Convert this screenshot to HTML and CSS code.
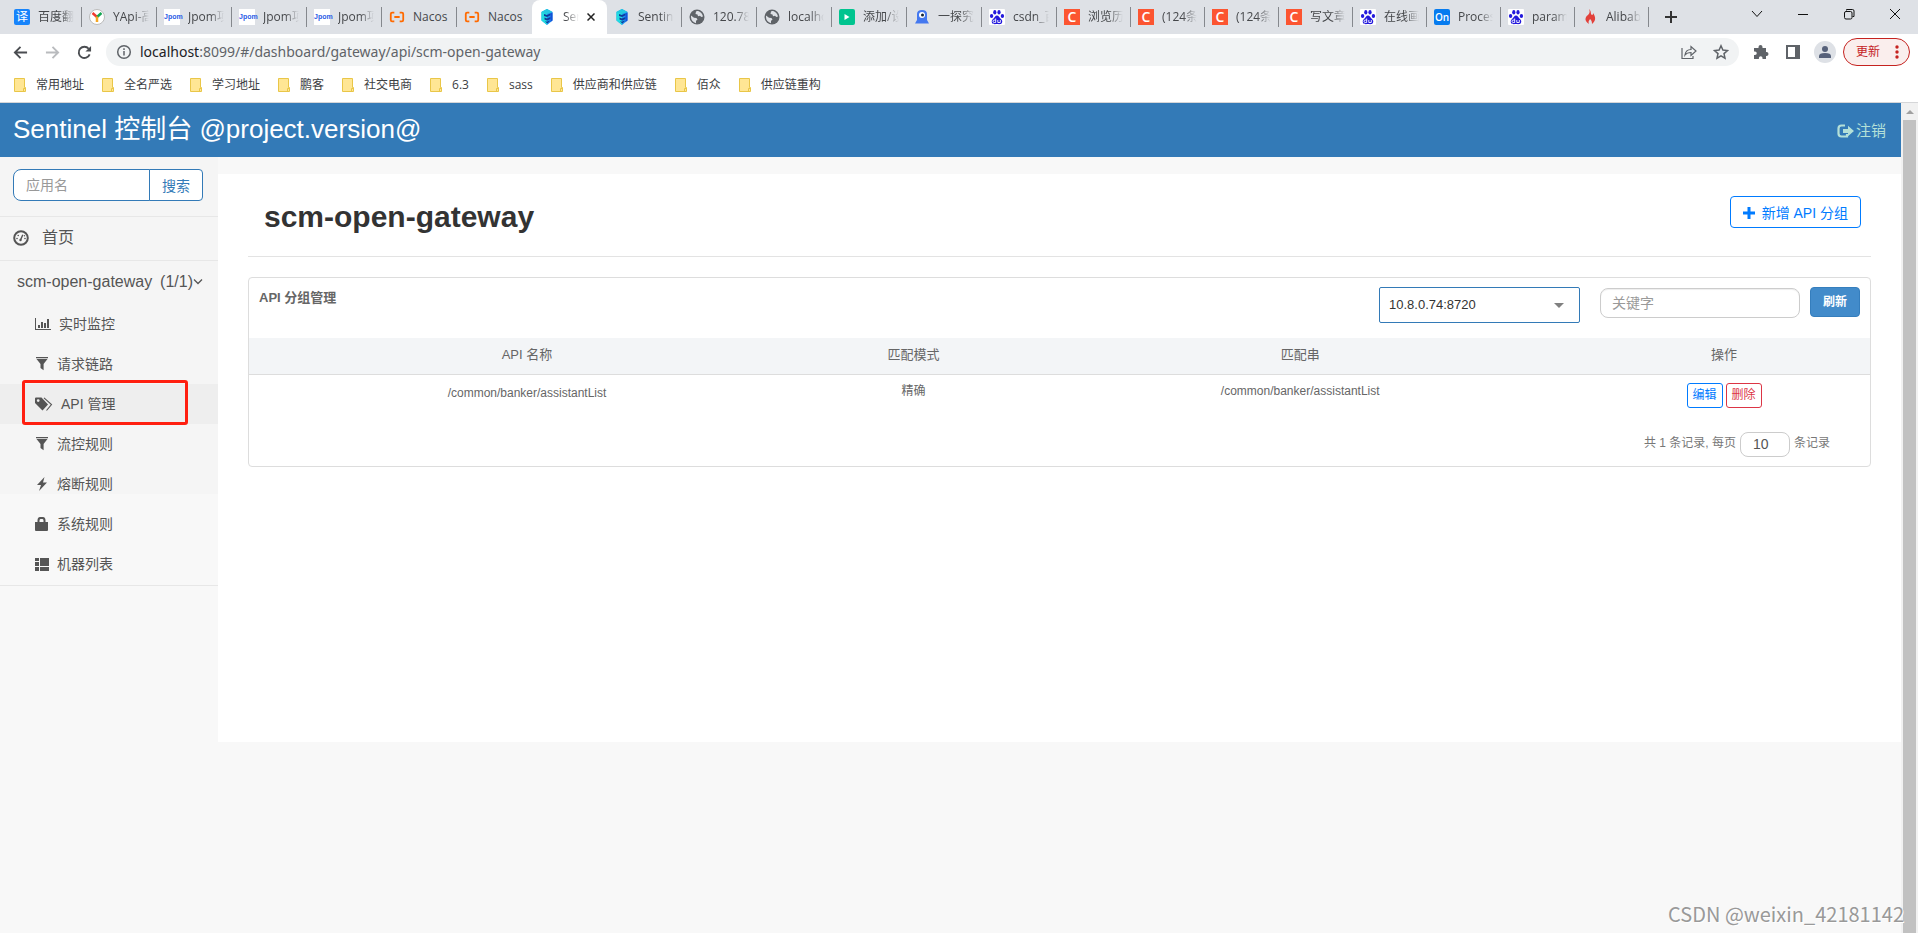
FILE: index.html
```html
<!DOCTYPE html>
<html lang="zh-CN">
<head>
<meta charset="utf-8">
<title>Sentinel 控制台</title>
<link rel="stylesheet" href="styles.css">
</head>
<body>
<svg class="defs" aria-hidden="true">
  <symbol id="paw" viewBox="0 0 16 16"><rect width="16" height="16" rx="1" fill="#fff"/><g fill="#2319dc"><ellipse cx="2.6" cy="7" rx="1.7" ry="2.1"/><ellipse cx="5.8" cy="3.2" rx="1.6" ry="2.2"/><ellipse cx="10" cy="3.2" rx="1.6" ry="2.2"/><ellipse cx="13.4" cy="7" rx="1.7" ry="2.1"/><path d="M8 6.6c1.8 0 2.4 2 3.7 3.2 1.6 1.4 1.9 2.5 1.3 4-.7 1.700-2.800 1.500-5 1.300-2.200.2-4.300.4-5-1.300-.6-1.500-.3-2.600 1.300-4C5.600 8.600 6.200 6.600 8 6.600z"/></g><path d="M6.700 9.500v4H5.200a1.200 1.200 0 010-2.400h1.500M8.800 11v2.500h2.500V11" fill="none" stroke="#fff" stroke-width=".9"/></symbol>
  <symbol id="globe" viewBox="0 0 16 16"><circle cx="8" cy="8" r="7.500" fill="#5f6368"/><path d="M2 6.500l3 2.200 2.500.3 1 1.700-1.500 1v2.500C4 13.500 2 11 2 8zM7 2.500L6.500 5l2 .5.500 1.700 2-.5 1.300 1.300 1.700-.5C13.500 4.500 11 2 8 2z" fill="#dee1e6"/></symbol>
  <symbol id="sentinel" viewBox="0 0 16 16"><path d="M8 0l5.500 3v8.500L8 16l-5.500-4.500V3z" fill="#1d8ff0"/><path d="M8 0v16l-5.500-4.500V3z" fill="#22dce0"/><path d="M8 0l5.500 3L8 5 2.500 3z" fill="#25c8e0"/><path d="M5 5l3 1 3.500-1.500v1.800L8 8 5 7zM5.500 8.500L8 9.500 11.500 8v2L8 11.500l-2.500-1zM6 12l2 .8 2.500-1.300v1L8 14.500z" fill="#0f3a98"/><path d="M11.500 4.500l2-1v8l-2 1.500z" fill="#1450d8"/></symbol>
  <symbol id="nacos" viewBox="0 0 18 16"><path d="M6 3H3.500Q2 3 2 4.500v7Q2 13 3.500 13H6M12 3h2.500Q16 3 16 4.500v7q0 1.500-1.500 1.500H12M6 8h6" fill="none" stroke="#ff6a00" stroke-width="2"/></symbol>
  <symbol id="folder" viewBox="0 0 12 14"><path d="M.5.500h10v9h1v4H.5z" fill="#ffe694" stroke="#e9c648"/><path d="M9.500 13V10.500h1.500" fill="none" stroke="#e9c648"/></symbol>
  <symbol id="filter" viewBox="0 0 14 14"><path d="M1 0h12v1.300H1zM1.500 2h11L8.600 7v6.300L5.500 11V7z"/></symbol>
</svg>

<header class="browser">
  <div class="tabstrip">
    <a class="tab first" href="#"><span class="fav f-blue">译</span><span class="tt">百度翻译</span></a>
    <a class="tab" href="#"><svg class="fav" viewBox="0 0 16 16"><circle cx="8" cy="8" r="7.500" fill="#fff" stroke="#bbb"/><path d="M3.500 4L8 8" stroke="#f23a2f" stroke-width="2.500"/><path d="M12.500 4L8 8" stroke="#15a653" stroke-width="2.500"/><path d="M8 7.500V13" stroke="#f5a623" stroke-width="2.500"/></svg><span class="tt">YApi-高效</span></a>
    <a class="tab" href="#"><span class="fav f-jpom">Jpom</span><span class="tt">Jpom项目</span></a>
    <a class="tab" href="#"><span class="fav f-jpom">Jpom</span><span class="tt">Jpom项目</span></a>
    <a class="tab" href="#"><span class="fav f-jpom">Jpom</span><span class="tt">Jpom项目</span></a>
    <a class="tab" href="#"><svg class="fav"><use href="#nacos"/></svg><span class="tt whole">Nacos</span></a>
    <a class="tab nosep" href="#"><svg class="fav"><use href="#nacos"/></svg><span class="tt whole">Nacos</span></a>
    <a class="tab active" href="#"><svg class="fav"><use href="#sentinel"/></svg><span class="tt">Sentinel</span><svg class="close" viewBox="0 0 8 8"><path d="M.5.500l7 7M7.500.500l-7 7" stroke="#222" stroke-width="1.500"/></svg></a>
    <a class="tab" href="#"><svg class="fav"><use href="#sentinel"/></svg><span class="tt">Sentinel</span></a>
    <a class="tab" href="#"><svg class="fav"><use href="#globe"/></svg><span class="tt">120.78.1</span></a>
    <a class="tab" href="#"><svg class="fav"><use href="#globe"/></svg><span class="tt">localhost</span></a>
    <a class="tab" href="#"><svg class="fav" viewBox="0 0 16 16"><rect width="16" height="16" rx="2" fill="#00c48f"/><path d="M5.500 5l5 3-5 3z" fill="#fff"/></svg><span class="tt">添加/设置</span></a>
    <a class="tab" href="#"><svg class="fav" viewBox="0 0 16 16"><path d="M3 5Q3 1 8 1t5 4v6l2 3.500H1L3 11z" fill="#4478ef"/><circle cx="8" cy="6" r="3" fill="#fff"/><circle cx="8.500" cy="6" r="1.500" fill="#123"/></svg><span class="tt">一探究竟</span></a>
    <a class="tab" href="#"><svg class="fav"><use href="#paw"/></svg><span class="tt">csdn_百度</span></a>
    <a class="tab narrow" href="#"><span class="fav f-c">C</span><span class="tt">浏览历史</span></a>
    <a class="tab narrow" href="#"><span class="fav f-c">C</span><span class="tt">(124条消息</span></a>
    <a class="tab narrow" href="#"><span class="fav f-c">C</span><span class="tt">(124条消息</span></a>
    <a class="tab narrow" href="#"><span class="fav f-c">C</span><span class="tt">写文章</span></a>
    <a class="tab narrow" href="#"><svg class="fav"><use href="#paw"/></svg><span class="tt">在线画图</span></a>
    <a class="tab narrow" href="#"><span class="fav f-on">On</span><span class="tt">Process</span></a>
    <a class="tab narrow" href="#"><svg class="fav"><use href="#paw"/></svg><span class="tt">params</span></a>
    <a class="tab narrow" href="#"><svg class="fav" viewBox="0 0 16 16"><path d="M7 0c3 3 1 5 3 6 1 0 1-1 1-2 3 4 3 8-1 11 0-3-1-4-2-5-1 2-2 2-1 5-5-3-4-7-1-9C8 4 8 2 7 0z" fill="#e2403a"/></svg><span class="tt">Alibaba</span></a>
    <button class="plain newtab" aria-label="新标签页"><svg viewBox="0 0 12 12" width="12" height="12"><path d="M6 0v12M0 6h12" stroke="#333" stroke-width="2"/></svg></button>
    <div class="winctl">
      <button class="plain" aria-label="搜索标签页"><svg viewBox="0 0 12 12"><path d="M1 3l5 5.500L11 3" /></svg></button>
      <button class="plain" aria-label="最小化"><svg viewBox="0 0 12 12"><path d="M1 6.500h10"/></svg></button>
      <button class="plain" aria-label="还原"><svg viewBox="0 0 12 12"><path d="M3.500 2.500V1.500h6q1.500 0 1.500 1.500v5.500h-1.500"/><rect x="1.500" y="3.500" width="7.500" height="7.500" rx="1.500"/></svg></button>
      <button class="plain" aria-label="关闭"><svg viewBox="0 0 12 12"><path d="M1 1l10 10M11 1L1 11"/></svg></button>
    </div>
  </div>

  <div class="toolbar">
    <button class="plain nav" aria-label="后退"><svg viewBox="0 0 16 16"><path d="M15 8H2M8 2L2 8l6 6" fill="none" stroke="#4a4d51" stroke-width="2"/></svg></button>
    <button class="plain nav" aria-label="前进"><svg viewBox="0 0 16 16"><path d="M1 8h13M8 2l6 6-6 6" fill="none" stroke="#b9bbbe" stroke-width="2"/></svg></button>
    <button class="plain nav" aria-label="刷新页面"><svg viewBox="0 0 16 16"><path d="M13.500 10A6 6 0 1112.500 4" fill="none" stroke="#4a4d51" stroke-width="2"/><path d="M15 1v6H9z" fill="#4a4d51"/></svg></button>
    <div class="omnibox">
      <svg class="i16" viewBox="0 0 16 16"><circle cx="8" cy="8" r="6.300" fill="none" stroke="#5f6368" stroke-width="1.500"/><path d="M8 7v4.500M8 4.300v1.600" stroke="#5f6368" stroke-width="1.500"/></svg>
      <span class="url"><b>localhost</b>:8099/#/dashboard/gateway/api/scm-open-gateway</span>
      <svg class="i16" viewBox="0 0 16 16"><path d="M1 4v10.500h11V12M4 11c.5-4 3-5.500 6-5.500V2.500L15 7l-5 4.500V8.500C7.500 8.500 5.500 9 4 11z" fill="none" stroke="#5f6368" stroke-width="1.200"/></svg>
      <svg class="i16" viewBox="0 0 16 16"><path d="M8 1.800l1.900 4.300 4.600.4-3.500 3.100 1 4.600L8 11.800l-4 2.400 1-4.600L1.500 6.500l4.600-.4z" fill="none" stroke="#5f6368" stroke-width="1.500"/></svg>
    </div>
    <div class="exts">
      <svg class="i16" viewBox="0 0 16 16"><path d="M1 4h4.500V3a2 2 0 014 0v1H13v4h.500a2 2 0 010 4H13v3H9.500v-1a1.800 1.800 0 00-3.600 0v1H1v-4h1a1.700 1.700 0 000-3.500H1z" fill="#5f6368"/></svg>
      <svg class="i16" viewBox="0 0 16 16"><path d="M1 1h14v14H1zM3 3v10h7V3z" fill="#5f6368" fill-rule="evenodd"/></svg>
      <svg class="avatar" viewBox="0 0 22 22"><circle cx="11" cy="11" r="11" fill="#dee1e6"/><circle cx="11" cy="8" r="3" fill="#56617a"/><path d="M5 17v-2q0-3 6-3t6 3v2z" fill="#56617a"/></svg>
      <button class="update">更新<svg viewBox="0 0 4 14" width="4" height="14"><g fill="#c5221f"><circle cx="2" cy="2" r="1.700"/><circle cx="2" cy="7" r="1.700"/><circle cx="2" cy="12" r="1.700"/></g></svg></button>
    </div>
  </div>

  <nav class="bookmarks" aria-label="书签">
    <a href="#"><svg><use href="#folder"/></svg>常用地址</a>
    <a href="#"><svg><use href="#folder"/></svg>全名严选</a>
    <a href="#"><svg><use href="#folder"/></svg>学习地址</a>
    <a href="#"><svg><use href="#folder"/></svg>鹏客</a>
    <a href="#"><svg><use href="#folder"/></svg>社交电商</a>
    <a href="#"><svg><use href="#folder"/></svg>6.3</a>
    <a href="#"><svg><use href="#folder"/></svg>sass</a>
    <a href="#"><svg><use href="#folder"/></svg>供应商和供应链</a>
    <a href="#"><svg><use href="#folder"/></svg>佰众</a>
    <a href="#"><svg><use href="#folder"/></svg>供应链重构</a>
  </nav>
</header>

<div class="viewport">
  <div class="app">
    <div class="topbar">
      <a class="brand" href="#">Sentinel 控制台 @project.version@</a>
      <a class="logout" href="#"><svg viewBox="0 0 17 14" width="17" height="14"><path d="M8 1.500H4.500Q1.500 1.500 1.500 4.500v5q0 3 3 3H10V10" fill="none" stroke="#b4e0d8" stroke-width="2.200"/><path d="M6 5h5V1.800L17 7l-6 5.200V9H6z" fill="#b4e0d8"/></svg>注销</a>
    </div>
    <div class="body">
      <aside class="sidebar">
        <form class="search">
          <input type="text" placeholder="应用名" aria-label="应用名">
          <button type="button">搜索</button>
        </form>
        <a class="home" href="#"><svg class="i16" viewBox="0 0 16 16"><circle cx="8" cy="8" r="6.800" fill="none" stroke="#555" stroke-width="2"/><path d="M7.500 10L9.800 4.800" stroke="#555" stroke-width="1.400"/><g fill="#555"><circle cx="7.500" cy="10" r="1.200"/><circle cx="4" cy="8.500" r=".8"/><circle cx="5.200" cy="5.500" r=".8"/><circle cx="12" cy="8.500" r=".8"/><circle cx="11.500" cy="5.800" r=".7"/></g></svg>首页</a>
        <a class="appname" href="#"><span>scm-open-gateway</span><span class="count">(1/1)</span><svg viewBox="0 0 10 6" width="10" height="6"><path d="M1 .500l4 4 4-4" fill="none" stroke="#555" stroke-width="1.300"/></svg></a>
        <ul class="menu">
          <li><a href="#"><svg class="wide" viewBox="0 0 16 14"><path d="M0 1h1v11h15v1H0zM3 8h2v3H3zM6 5h2v6H6zM9 6h2v5H9zM12 2h2v9h-2z"/></svg>实时监控</a></li>
          <li><a href="#"><svg><use href="#filter"/></svg>请求链路</a></li>
          <li class="current"><a href="#"><svg class="tags" viewBox="0 0 18 14"><path d="M0 1.500Q0 .5 1 .5h5.500L13 7.500 7.500 13.500 0 6zM3.200 2.200a1.400 1.400 0 100 2.800 1.400 1.400 0 000-2.800z" fill-rule="evenodd"/><path d="M9 .800L16.500 7.500 11.500 13.500" fill="none" stroke="#555" stroke-width="1.100"/></svg>API 管理</a><span class="mark"></span></li>
          <li><a href="#"><svg><use href="#filter"/></svg>流控规则</a></li>
          <li><a href="#"><svg viewBox="0 0 14 14"><path d="M9.500 0L2 8h4l-2 6 8-8.500H8z"/></svg>熔断规则</a></li>
          <li><a href="#"><svg viewBox="0 0 14 14"><path d="M0 5h2.500V3.500Q2.500 0 5 0h3q2.500 0 2.500 3.500V5H13v8q0 1-1 1H1q-1 0-1-1zM4.500 5h4V3.500Q8.500 2 7.500 2h-2q-1 0-1 1.500z" fill-rule="evenodd"/></svg>系统规则</a></li>
          <li><a href="#"><svg viewBox="0 0 14 14"><path d="M0 1h4v3H0zM5 1h9v8H5zM0 5h4v4H0zM0 10h4v4H0zM5 10h9v4H5z"/></svg>机器列表</a></li>
        </ul>
      </aside>
      <main class="content">
        <div class="heading">
          <h1>scm-open-gateway</h1>
          <button class="add"><svg viewBox="0 0 12 12" width="12" height="12"><path d="M6 0v12M0 6h12" stroke="#007bff" stroke-width="3"/></svg>新增 API 分组</button>
        </div>
        <section class="panel">
          <div class="panel-head">
            <h2>API 分组管理</h2>
            <div class="picker">
              <select aria-label="机器"><option>10.8.0.74:8720</option></select>
              <svg viewBox="0 0 10 5" width="10" height="5"><path d="M0 0h10L5 5z" fill="#808080"/></svg>
            </div>
            <input class="keyword" type="text" placeholder="关键字" aria-label="关键字">
            <button class="refresh">刷新</button>
          </div>
          <table>
            <colgroup><col class="c-name"><col class="c-mode"><col class="c-name"><col></colgroup>
            <thead><tr><th>API 名称</th><th>匹配模式</th><th>匹配串</th><th>操作</th></tr></thead>
            <tbody><tr>
              <td class="name">/common/banker/assistantList</td><td>精确</td><td>/common/banker/assistantList</td>
              <td><div class="ops"><button class="edit">编辑</button><button class="del">删除</button></div></td>
            </tr></tbody>
          </table>
          <div class="pager"><span>共 1 条记录, 每页</span><input type="text" value="10" aria-label="每页条数"><span>条记录</span></div>
        </section>
      </main>
    </div>
  </div>
  <div class="scrollbar"><svg viewBox="0 0 8 4" width="8" height="4"><path d="M0 4h8L4 0z" fill="#a0a0a0"/></svg><div class="thumb"></div></div>
  <div class="watermark">CSDN @weixin_42181142</div>
</div>
</body>
</html>
```
FILE: styles.css
```css
* { box-sizing: border-box; }
body {
  margin: 0;
  height: 100vh;
  display: flex;
  flex-direction: column;
  overflow: hidden;
  background: #f8f8f8;
  font: 14px/20px "Liberation Sans", "Noto Sans CJK SC", sans-serif;
  color: #333;
}
a { color: inherit; text-decoration: none; }
button, input, select { font: inherit; margin: 0; }
button { cursor: pointer; }
.defs { display: none; }
.plain { border: 0; background: none; padding: 0; display: flex; align-items: center; justify-content: center; }
.i16 { width: 16px; height: 16px; flex: none; }

/* browser frame */
.browser {
  flex: none;
  background: #fff;
  border-bottom: 1px solid #d5d6d8;
  font-family: "Open Sans", "Noto Sans CJK SC", sans-serif;
  font-size: 12px;
}
.tabstrip { display: flex; height: 34px; padding-left: 7px; background: #dee1e6; }
.tab {
  flex: 0 1 75px;
  min-width: 0;
  display: flex;
  align-items: center;
  gap: 8px;
  padding: 0 8px 0 7px;
  color: #45474a;
  position: relative;
}
.tab.narrow { flex-basis: 74px; }
.tab::after {
  content: "";
  position: absolute;
  right: 0;
  top: 7px;
  width: 1px;
  height: 20px;
  background: #85888d;
}
.tab.nosep::after, .tab.active::after { display: none; }
.tab.active { background: #fff; border-radius: 8px 8px 0 0; }
.tab.active .tt { flex: 0 1 16px; }
.tt {
  flex: 1;
  min-width: 0;
  overflow: hidden;
  white-space: nowrap;
  -webkit-mask-image: linear-gradient(to left, transparent, #000 14px);
  mask-image: linear-gradient(to left, transparent, #000 14px);
}
.tt.whole { overflow: visible; -webkit-mask-image: none; mask-image: none; }
.fav { width: 16px; height: 16px; flex: none; text-align: center; line-height: 16px; }
.close { width: 8px; height: 8px; flex: none; }
.f-blue { background: #1784fb; color: #fff; border-radius: 2px; }
.f-jpom { background: #fff; color: #2b5ce6; font-family: "Liberation Sans", sans-serif; font-size: 7px; font-weight: 700; }
.f-c { background: #fc5531; color: #fff; font-size: 14px; font-weight: 600; }
.f-on { background: #067bef; color: #fff; font-size: 10px; font-weight: 600; border-radius: 2px; }
.newtab { width: 44px; }
.winctl { display: flex; margin-left: auto; height: 28px; }
.winctl button { width: 46px; }
.winctl svg { width: 12px; height: 12px; fill: none; stroke: #111; stroke-width: 1; }

.toolbar { display: flex; align-items: center; height: 36px; padding: 0 8px 0 4px; }
.nav { width: 32px; height: 28px; }
.nav svg { width: 15px; height: 15px; }
.omnibox {
  flex: 1;
  display: flex;
  align-items: center;
  height: 28px;
  margin-left: 6px;
  padding: 0 10px;
  border-radius: 14px;
  background: #f1f3f4;
}
.url { flex: 1; margin-left: 8px; font-family: "Open Sans", sans-serif; font-family: "Noto Sans", sans-serif; font-size: 14px; color: #5f6368; }
.url b { font-weight: 400; color: #202124; }
.url + svg { margin-right: 16px; }
.exts { display: flex; align-items: center; gap: 16px; margin-left: 14px; }
.avatar { width: 22px; height: 22px; margin-left: -3px; }
.update {
  display: flex;
  align-items: center;
  justify-content: space-between;
  width: 67px;
  height: 28px;
  margin-left: -9px;
  padding: 0 10px 0 12px;
  border: 1px solid #c5221f;
  border-radius: 14px;
  background: #faeeed;
  color: #c5221f;
}
.bookmarks { display: flex; align-items: center; gap: 18px; height: 32px; padding: 0 14px 2px; color: #3c4043; line-height: 18px; }
.bookmarks a { display: flex; align-items: center; gap: 10px; }
.bookmarks svg { width: 12px; height: 14px; }

/* application */
.viewport { flex: 1; min-height: 0; display: flex; position: relative; }
.app { flex: 1; min-width: 0; }
.topbar {
  display: flex;
  justify-content: space-between;
  align-items: center;
  height: 54px;
  padding: 0 15px 0 13px;
  background: #337ab7;
}
.brand { font-size: 26px; line-height: 30px; color: #fff; padding-bottom: 3px; }
.logout { display: flex; align-items: center; gap: 2px; padding-top: 2px; font-size: 15px; color: #b4e0d8; }
.body { display: flex; align-items: flex-start; }

.sidebar {
  flex: none;
  width: 218px;
  padding-top: 12px;
  color: #555;
  background: linear-gradient(#f5f5f5 337px, #f8f8f8 337px);
}
.search { display: flex; height: 32px; margin: 0 15px 15px 13px; }
.search input {
  flex: 1;
  min-width: 0;
  padding: 0 12px;
  border: 1px solid #337ab7;
  border-radius: 8px 0 0 8px;
  background: #fff;
}
.search button {
  width: 54px;
  margin-left: -1px;
  padding: 1px 0 0;
  border: 1px solid #337ab7;
  border-radius: 0 4px 4px 0;
  background: #fff;
  color: #337ab7;
}
input::placeholder { color: #999; opacity: 1; }
.home, .appname { display: flex; align-items: center; height: 44px; border-top: 1px solid #e7e7e7; font-size: 16px; white-space: nowrap; }
.home { gap: 13px; padding: 0 13px 2px; }
.appname { padding: 0 15px 2px 17px; }
.count { margin-left: auto; }
.menu { list-style: none; margin: 0; padding: 0 0 1px; border-bottom: 1px solid #e7e7e7; }
.menu li { position: relative; }
.menu a { display: flex; align-items: center; gap: 8px; height: 40px; padding-left: 35px; }
.menu svg { width: 14px; height: 14px; fill: #555; flex: none; }
.menu svg.wide { width: 16px; }
.menu svg.tags { width: 18px; }
.menu .current { background: #eee; }
.mark { position: absolute; inset: -4px 30px -1px 22px; border: 3px solid #ff1f10; border-radius: 3px; }

.content { flex: 1; min-width: 0; min-height: 568px; margin-top: 17px; padding: 0 30px; background: #fff; }
.heading {
  display: flex;
  justify-content: space-between;
  align-items: flex-start;
  height: 83px;
  padding: 22px 10px 0 16px;
  border-bottom: 1px solid #e3e3e3;
}
h1 { margin: 4px 0 0; font-size: 30px; line-height: 34px; }
.add {
  display: flex;
  align-items: center;
  gap: 7px;
  height: 32px;
  padding: 1px 12px 0;
  border: 1px solid #007bff;
  border-radius: 4px;
  background: #fff;
  color: #007bff;
}
.panel { margin-top: 20px; border: 1px solid #ddd; border-radius: 4px; }
.panel-head { display: flex; align-items: flex-start; height: 60px; padding: 9px 10px 0; }
h2 { flex: 1; margin: 1px 0 0; font-size: 13px; line-height: 20px; color: #666; }
.picker { position: relative; margin-right: 20px; }
.picker select {
  appearance: none;
  width: 201px;
  height: 36px;
  padding: 0 9px;
  border: 1px solid #337ab7;
  border-radius: 2px;
  background: #fff;
  color: #333;
  font-size: 13px;
}
.picker svg { position: absolute; right: 16px; top: 16px; pointer-events: none; }
.keyword {
  width: 200px;
  height: 30px;
  margin: 1px 10px 0 0;
  padding: 0 11px;
  border: 1px solid #ccc;
  border-radius: 8px;
  box-shadow: inset 0 1px 1px #eee;
}
.refresh {
  width: 50px;
  height: 30px;
  padding: 0;
  border: 1px solid #357ebd;
  border-radius: 4px;
  background: #428bca;
  color: #fff;
  font-size: 12px;
  font-weight: 700;
}
table { width: 100%; table-layout: fixed; border-collapse: collapse; color: #666; text-align: center; }
.c-name { width: 34.3%; }
.c-mode { width: 13.4%; }
th { height: 36px; padding: 0 0 2px; background: #f3f5f7; border-bottom: 1px solid #ddd; font-size: 13px; font-weight: 400; }
td { padding: 8px 0; font-size: 12px; line-height: 16px; vertical-align: top; }
td.name { padding-top: 10px; }
.ops { display: flex; justify-content: center; gap: 3px; }
.ops button { width: 36px; height: 25px; padding: 0 0 1px; border: 1px solid; border-radius: 3px; background: #fff; line-height: 16px; }
.ops .edit { color: #007bff; }
.ops .del { color: #dc3545; }
.pager { display: flex; justify-content: flex-end; gap: 4px; padding: 16px 40px 9px 0; font-size: 12px; line-height: 22px; color: #777; }
.pager input {
  width: 50px;
  height: 25px;
  padding: 0 12px;
  border: 1px solid #ccc;
  border-radius: 8px;
  font-size: 14px;
  color: #555;
}

.scrollbar { flex: none; width: 17px; padding: 0 2px; display: flex; flex-direction: column; background: #f1f1f1; }
.scrollbar svg { margin: 7px 0 6px 3px; flex: none; }
.thumb { flex: 1; background: #c1c1c1; }
.watermark {
  position: absolute;
  right: 14px;
  bottom: 8px;
  font-family: "Noto Sans CJK SC", sans-serif;
  font-size: 20px;
  line-height: 22px;
  color: #999;
  text-shadow: 1px 1px 0 #fff;
}
```
